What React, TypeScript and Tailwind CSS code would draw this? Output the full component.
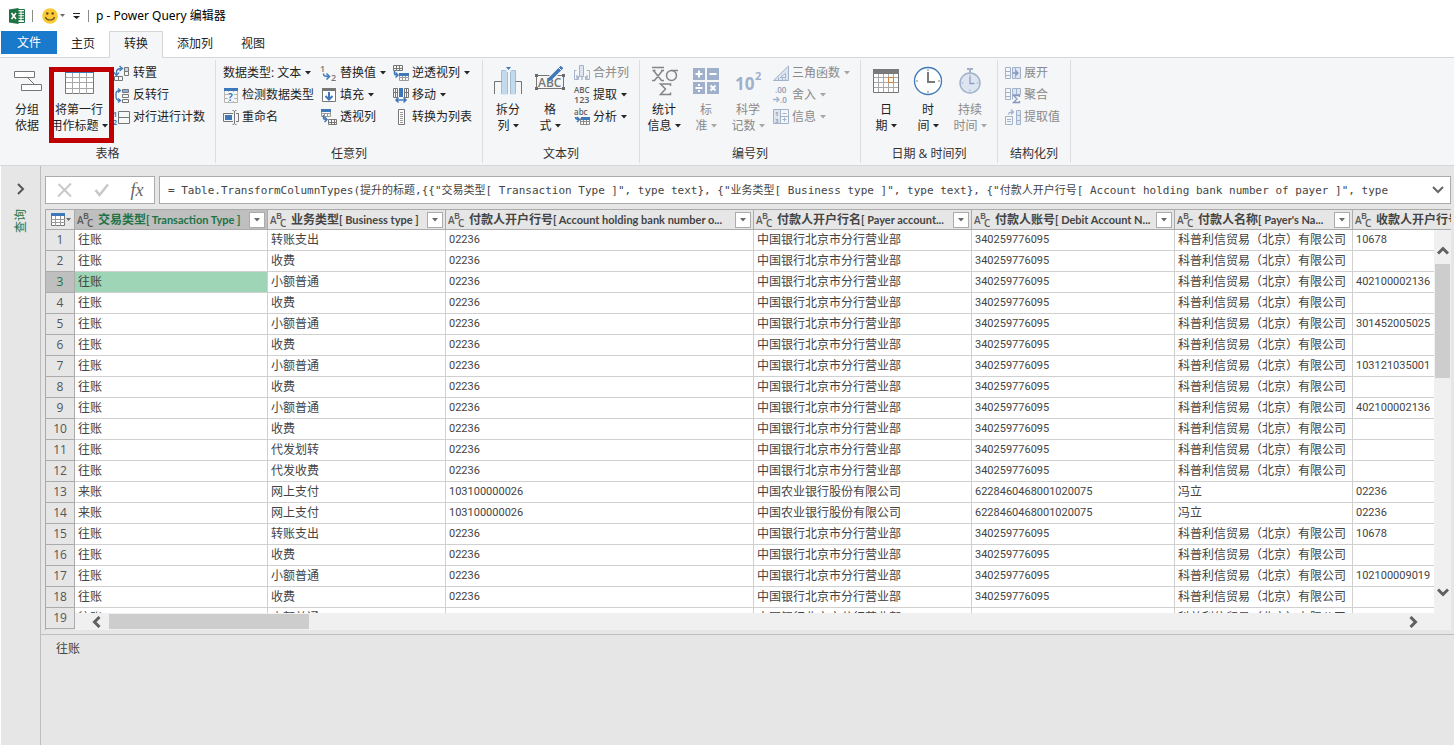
import React from 'react';

const GREY = '#767676';
const BLUE = '#3f78b8';
const DIM = '#a3b2cb';
const DIM_FILL = '#dde5f1';

const Svg: React.FC<{ size?: number; children: React.ReactNode }> = ({ size = 16, children }) => (
    <svg width={size} height={size} viewBox={`0 0 ${size} ${size}`} fill="none" className="shrink-0 overflow-visible" aria-hidden="true">
        {children}
    </svg>
);

const Caret: React.FC<{ dim?: boolean }> = ({ dim }) => (
    <svg width="6" height="4" viewBox="0 0 6 4" className="shrink-0" aria-hidden="true">
        <path d="M0 0h6L3 3.5z" fill={dim ? '#a6a6a6' : '#262626'} />
    </svg>
);

/* ---------- small ribbon icons (16px) ---------- */

const TransposeIcon = () => (
    <Svg>
        <path d="M10.5 2.5h4v4h-4z" fill="#c3d5ea" stroke={GREY} />
        <path d="M10.5 6.5h4v4h-4zM.5 11.5h4v4h-4zM4.500 11.5h4v4h-4z" stroke={GREY} />
        <path d="M2.500 9.500V7c0-2.500 1.500-3.500 5-3.500" stroke={BLUE} strokeWidth="1.300" />
        <path d="M5.500 1l3 2.500-3 2.500M0 7.500l2.500 3 2.500-3" stroke={BLUE} strokeWidth="1.300" />
    </Svg>
);

const ReverseIcon = () => (
    <Svg>
        <path d="M8.500 2.500h6v3h-6z" fill="#8fb0d5" stroke={GREY} />
        <path d="M8.500 7.500h6v3h-6zM8.500 12.500h6v3h-6z" stroke={GREY} />
        <path d="M6 3.500C1.500 3.500 2 6 2 8.500s0 5 4 5" stroke={BLUE} strokeWidth="1.300" />
        <path d="M4 1.500l2.500 2L4 5.500M4 11.500l2.500 2-2.500 2" stroke={BLUE} strokeWidth="1.300" />
    </Svg>
);

const CountIcon = () => (
    <Svg>
        <path d="M4.500 2.500h11v12h-11zM4.500 8.500h11" stroke={GREY} />
        <text x="-1" y="8" fontSize="7" fontWeight="700" fill={BLUE}>1</text>
        <text x="-1" y="16" fontSize="7" fontWeight="700" fill={BLUE}>2</text>
    </Svg>
);

const DetectIcon = () => (
    <Svg>
        <path d="M1.500 3.500h13v12h-13zM5.500 3v12M10.500 3v12M1 7.500h14M1 11.500h14" stroke="#b4b4b4" />
        <path d="M1 1h14v3H1z" fill={BLUE} />
        <path d="M5 5h6v9H5z" fill="#f5f6f8" />
        <text x="5" y="14" fontSize="10" fontWeight="700" fill={BLUE}>?</text>
    </Svg>
);

const RenameIcon = () => (
    <Svg>
        <path d="M10 4.500H.5v8H10M13 4.500h2.500v8H13" stroke={GREY} />
        <path d="M2 6h7v5H2z" fill={BLUE} />
        <path d="M9.500 1.500c1.500 0 2 .5 2 1.500v11c0 1-.5 1.500-2 1.500M13.500 1.500c-1.500 0-2 .5-2 1.500v11c0 1 .5 1.500 2 1.500" stroke={GREY} />
    </Svg>
);

const ReplaceIcon = () => (
    <Svg>
        <text x="-1" y="7" fontSize="9" fontWeight="600" fill={GREY}>1</text>
        <text x="10" y="16" fontSize="9" fontWeight="600" fill={GREY}>2</text>
        <path d="M2.500 8.500c0 2.500 1 3 5 3" stroke={BLUE} strokeWidth="1.500" />
        <path d="M5.500 8.500l3 3-3 3" stroke={BLUE} strokeWidth="1.500" />
    </Svg>
);

const FillIcon = () => (
    <Svg>
        <path d="M1.500 1.500h13v13h-13z" fill="#fff" stroke={GREY} />
        <path d="M1 1h14v3H1z" fill={GREY} />
        <path d="M8 5v7M4.500 9L8 12.500 11.500 9" stroke={BLUE} strokeWidth="2" />
    </Svg>
);

const PivotIcon = () => (
    <Svg>
        <path d="M.5 1.500h9v6h-9zM3.500 4v4M6.500 4v4M.5 4.500h9" stroke="#9a9a9a" />
        <path d="M0 0h10v3H0z" fill={BLUE} />
        <path d="M7.500 10.500h8v5h-8zM10.500 10v5M13.500 10v5M7 13.500h8" stroke={GREY} />
        <path d="M2.500 6v3c0 1 .5 1.500 3 1.500" stroke={BLUE} strokeWidth="1.500" />
        <path d="M3.500 8l2.500 2.500L3.500 13" stroke={BLUE} strokeWidth="1.500" />
    </Svg>
);

const UnpivotIcon = () => (
    <Svg>
        <path d="M.5.5h9v5h-9zM3.500 0v5M6.500 0v5M0 3.500h9" stroke={GREY} />
        <path d="M6.500 9.500h9v6h-9zM9.500 11v4M12.500 11v4M6.500 12.500h9" stroke="#9a9a9a" />
        <path d="M6 8h10v3H6z" fill={BLUE} />
        <path d="M1.500 6v2.500c0 1 .5 1.500 2.500 1.500" stroke={BLUE} strokeWidth="1.500" />
        <path d="M2.500 7.500L5 10l-2.500 2.500" stroke={BLUE} strokeWidth="1.500" />
    </Svg>
);

const MoveIcon = () => (
    <Svg>
        <path d="M.5 1.500h4v9h-4zM11.500 1.500h4v9h-4zM2.500 1v9M13.500 1v9M.5 5.500h4M11.500 5.500h4" stroke={GREY} />
        <path d="M6 1h4v9H6z" fill={BLUE} />
        <path d="M3 13h10M5.500 10.500L3 13l2.500 2.500M10.500 10.500L13 13l-2.500 2.500" stroke={BLUE} strokeWidth="1.500" />
    </Svg>
);

const ListIcon = () => (
    <Svg>
        <path d="M5.500.5h6v15h-6z" fill="#fff" stroke={GREY} />
        <path d="M7 3.500h3M7 5.500h3M7 7.500h3M7 9.500h3M7 11.500h3M7 13.500h3" stroke="#999" />
    </Svg>
);

const MergeIcon = () => (
    <Svg>
        <path d="M5.500.5h4v11h-4z" fill={DIM_FILL} stroke={DIM} />
        <path d="M2.500 5.500h-2v9h4v-3M12.500 5.500h3v9h-4v-3" stroke={DIM} />
        <path d="M3 15v-4l2 2M13 15v-4l-2 2M8 15v-3" stroke={DIM} strokeWidth="1.300" />
    </Svg>
);

const ExtractIcon = () => (
    <Svg>
        <text x="0" y="6" fontSize="8" fontWeight="600" fill="#5f5f5f">ABC</text>
        <text x="0" y="16" fontSize="9" fontWeight="600" fill="#5f5f5f">123</text>
    </Svg>
);

const ParseIcon = () => (
    <Svg>
        <text x="0" y="6" fontSize="8" fontWeight="600" fill="#5f5f5f">abc</text>
        <path d="M6.500 9.500h9v6h-9zM9.500 11v4M12.500 11v4M6.500 12.500h9" stroke="#8a8a8a" />
        <path d="M7 8h9v3H7z" fill={BLUE} />
        <path d="M1.500 8c0 2 1 2.500 3.500 2.500M3 8l2.500 2.500L3 13" stroke={BLUE} strokeWidth="1.500" />
    </Svg>
);

const TrigIcon = () => (
    <Svg>
        <path d="M15.500 1v14.500H.5z" fill={DIM_FILL} stroke={DIM} />
        <path d="M12.500 8.500v4h-5z" fill="#f5f6f8" stroke={DIM} />
        <path d="M5.500 15.500v-3M9.500 15.500v-2M12.500 15.500v-2" stroke={DIM} />
    </Svg>
);

const RoundIcon = () => (
    <Svg>
        <text x="2" y="6" fontSize="8" fontWeight="600" fill="#8d9bb3">.00</text>
        <text x="7" y="16" fontSize="8" fontWeight="600" fill="#8d9bb3">.0</text>
        <path d="M0 12.500h6M3.500 10L6 12.500 3.500 15" stroke={DIM} strokeWidth="1.300" />
    </Svg>
);

const InfoIcon = () => (
    <Svg>
        <path d="M.5.5h15v14H.5z" fill="#f5f6f8" stroke={DIM} />
        <path d="M1 1h6v13H1z" fill={DIM_FILL} />
        <path d="M7.500 1v13M7.500 7.500h8M9.500 4.500h4M9.500 10.500h4M11.500 8.500v4" stroke={DIM} />
        <text x="2" y="7" fontSize="6" fontWeight="700" fill="#8d9bb3">1</text>
        <text x="2" y="14" fontSize="6" fontWeight="700" fill="#8d9bb3">3</text>
    </Svg>
);

const ExpandIcon = () => (
    <Svg>
        <path d="M.5 2.500h5v11h-5zM.5 6.500h5M.5 10.500h5" stroke={DIM} />
        <path d="M7.500 2.500h3v11h-3z" fill={DIM_FILL} stroke={DIM} />
        <path d="M10.500 2.500h5v11h-5z" fill={DIM_FILL} stroke={DIM} />
        <path d="M7.500 8H13M10.500 5.500L13 8l-2.500 2.500" stroke="#8499bd" strokeWidth="1.300" />
    </Svg>
);

const AggregateIcon = () => (
    <Svg>
        <path d="M.5 1.500h5v11h-5zM.5 5.500h5M.5 9.500h5" stroke={DIM} />
        <path d="M7.500 1.500h8v6h-8zM11.500 1v6M7.500 7.500v5" fill={DIM_FILL} stroke={DIM} />
        <path d="M14.500 10V8.500h-6L12 12l-3.500 3.500h6V14" stroke="#8499bd" strokeWidth="1.300" />
    </Svg>
);

const ValuesIcon = () => (
    <Svg>
        <path d="M.5 7.500h7v8h-7zM2 10.500h4M2 12.500h4" stroke={DIM} />
        <path d="M11.500 1.500h4v14h-4zM11.500 6.500h4M11.500 11.500h4" fill={DIM_FILL} stroke={DIM} />
        <path d="M3.500 5.500c0-2 1-2.500 5-2.500M6 .5L8.500 3 6 5.500" stroke={DIM} strokeWidth="1.300" />
    </Svg>
);

/* ---------- large ribbon icons (32px) ---------- */

const GroupByIcon = () => (
    <Svg size={32}>
        <path d="M3.500 5.500h20v6h-20zM10.500 18.500h20v6h-20z" fill="#fff" stroke={GREY} />
        <path d="M17 12l6 6" stroke={GREY} />
    </Svg>
);

const HeaderRowIcon = () => (
    <Svg size={32}>
        <path d="M2.500 6.500h28v21h-28z" fill="#fff" stroke={GREY} />
        <path d="M9.500 7v21M16.500 7v21M23.500 7v21M3 11.500h27M3 16.500h27M3 22.500h27" stroke="#a8a8a8" />
        <path d="M2 4h29v3H2z" fill={BLUE} />
    </Svg>
);

const SplitIcon = () => (
    <Svg size={32}>
        <path d="M10 4.500h5v24h-5zM18 4.500h5v24h-5z" fill="#c3d9ec" />
        <path d="M9.500 28V4.500h4M23.500 28V4.500h-4M15.500 28V6M18.500 28V6" stroke="#a9bccf" />
        <path d="M2.500 28V15.500h7M29.500 28V15.500h-6" stroke={GREY} />
        <path d="M14 1h5l-2.500 3z" fill={BLUE} />
    </Svg>
);

const FormatIcon = () => (
    <Svg size={32}>
        <path d="M2.500 9.500h27v13h-27z" stroke={GREY} />
        <path d="M1 8h3v3H1zM28 8h3v3h-3zM1 21h3v3H1zM28 21h3v3h-3z" fill="#6a6a6a" />
        <text x="4" y="21" fontSize="12" fontWeight="600" fill={GREY}>ABC</text>
        <path d="M27.500 1.500L17 12" stroke="#f5f6f8" strokeWidth="6" />
        <path d="M28 1L16 13" stroke={BLUE} strokeWidth="3.500" />
        <path d="M15 11l3 3-5 2z" fill={BLUE} />
        <path d="M24.500 1.500l3 3" stroke="#f5f6f8" />
    </Svg>
);

const StatsIcon = () => (
    <Svg size={32}>
        <path d="M4 1.500h12M5.500 4.500l8 10M14.500 4.500l-8 10M4 14.500h3M13 14.500h3M4.500 4.500h3M13 4.500h3" stroke="#858585" strokeWidth="1.500" />
        <path d="M30 4.500h-6.500" stroke="#858585" strokeWidth="1.500" />
        <circle cx="23.500" cy="9.500" r="5" stroke="#858585" strokeWidth="1.500" />
        <path d="M22.500 20v-2H12.500l5 5-5 5.500h10v-2" stroke="#858585" strokeWidth="1.500" />
    </Svg>
);

const StandardIcon = () => (
    <Svg size={32}>
        <path d="M3 2h12v12H3zM17 2h12v12H17zM3 16h12v12H3zM17 16h12v12H17z" fill="#9fb0cd" />
        <path d="M5.500 8h7M9 4.500v7M19.500 8h7M5.500 22h7M20.500 19.500l5 5M25.500 19.500l-5 5" stroke="#fff" strokeWidth="2" />
        <path d="M8 18h2v2H8zM8 24h2v2H8z" fill="#fff" />
    </Svg>
);

const ScientificIcon = () => (
    <Svg size={32}>
        <text x="3" y="24" fontSize="17" fontWeight="700" fill="#9fb0cd">10</text>
        <text x="23" y="14" fontSize="11" fontWeight="700" fill="#9fb0cd">2</text>
    </Svg>
);

const DateIcon = () => (
    <Svg size={32}>
        <path d="M3.500 4.500h25v22h-25z" fill="#fff" stroke={GREY} />
        <path d="M8.500 8v18M13.500 8v18M18.500 8v18M23.500 8v18M4 11.500h24M4 16.500h24M4 21.500h24" stroke="#a8a8a8" />
        <path d="M3 3h26v5H3z" fill="#7a7a7a" />
        <path d="M18.500 11.500h5v5h-5z" fill="#fff" stroke="#e07b28" />
    </Svg>
);

const TimeIcon = () => (
    <Svg size={32}>
        <circle cx="16" cy="15" r="13.500" fill="#fff" stroke={BLUE} strokeWidth="1.300" />
        <path d="M16 6v10h7" stroke="#7a7a7a" strokeWidth="2" />
        <path d="M16 3v2M16 25v2M4 15h2M26 15h2" stroke="#7a7a7a" />
    </Svg>
);

const DurationIcon = () => (
    <Svg size={32}>
        <circle cx="16" cy="17" r="10" fill={DIM_FILL} stroke={DIM} strokeWidth="1.500" />
        <path d="M13 3h6M16 3v4" stroke={DIM} strokeWidth="2" />
        <path d="M16 10.500v7h4.500" stroke="#8d9fc0" strokeWidth="1.300" />
        <path d="M16 8.500v2M16 23.500v2M7.500 17h2M22.500 17h2" stroke={DIM} />
    </Svg>
);

/* ---------- ribbon building blocks ---------- */

interface SmallButtonProps {
    label: string;
    icon?: React.ReactNode;
    caret?: boolean;
    disabled?: boolean;
}

const SmallButton: React.FC<SmallButtonProps> = ({ label, icon, caret, disabled }) => (
    <button
        type="button"
        disabled={disabled}
        className="flex h-[22px] items-center gap-[3px] whitespace-nowrap text-[#1e1e1e] disabled:text-[#8a8a8a]"
    >
        {icon}
        <span className="mr-px">{label}</span>
        {caret && <Caret dim={disabled} />}
    </button>
);

interface LargeButtonProps {
    lines: [string, string];
    icon: React.ReactNode;
    caret?: boolean;
    disabled?: boolean;
    className: string;
}

const LargeButton: React.FC<LargeButtonProps> = ({ lines, icon, caret, disabled, className }) => (
    <button
        type="button"
        disabled={disabled}
        className={`flex shrink-0 flex-col items-center pt-1 whitespace-nowrap leading-4 text-[#1e1e1e] disabled:text-[#8a8a8a] ${className}`}
    >
        {icon}
        <span className="mt-1">{lines[0]}</span>
        <span className="flex items-center gap-[3px]">
            {lines[1]}
            {caret && <Caret dim={disabled} />}
        </span>
    </button>
);

interface GroupProps {
    label: string;
    width: string;
    inset: string;
    children: React.ReactNode;
}

const Group: React.FC<GroupProps> = ({ label, width, inset, children }) => (
    <section className={`my-0.5 flex shrink-0 flex-col justify-between border-r border-[#dcdee1] ${width}`}>
        <div className={`flex pt-0.5 ${inset}`}>{children}</div>
        <h2 className="pb-px text-center text-[#333]">{label}</h2>
    </section>
);

const Column: React.FC<{ className?: string; children: React.ReactNode }> = ({ className = '', children }) => (
    <div className={`flex shrink-0 flex-col items-start ${className}`}>{children}</div>
);

const Ribbon = () => (
    <div className="flex h-[109px] overflow-hidden border-y border-[#d5d7da] bg-[#f5f6f8]">
        <Group label="表格" width="w-[216px]" inset="pl-0.5">
            <LargeButton lines={['分组', '依据']} icon={<GroupByIcon />} className="w-[50px]" />
            <div className="relative">
                <LargeButton lines={['将第一行', '用作标题']} icon={<HeaderRowIcon />} caret className="w-[54px]" />
                <div className="pointer-events-none absolute top-[5px] -left-[3px] h-[76px] w-[65px] border-[5px] border-[#c00000]" />
            </div>
            <Column className="pl-2">
                <SmallButton label="转置" icon={<TransposeIcon />} />
                <SmallButton label="反转行" icon={<ReverseIcon />} />
                <SmallButton label="对行进行计数" icon={<CountIcon />} />
            </Column>
        </Group>

        <Group label="任意列" width="w-[267px]" inset="pl-[7px]">
            <Column className="w-[98px]">
                <SmallButton label="数据类型: 文本" caret />
                <SmallButton label="检测数据类型" icon={<DetectIcon />} />
                <SmallButton label="重命名" icon={<RenameIcon />} />
            </Column>
            <Column className="w-[72px]">
                <SmallButton label="替换值" icon={<ReplaceIcon />} caret />
                <SmallButton label="填充" icon={<FillIcon />} caret />
                <SmallButton label="透视列" icon={<PivotIcon />} />
            </Column>
            <Column>
                <SmallButton label="逆透视列" icon={<UnpivotIcon />} caret />
                <SmallButton label="移动" icon={<MoveIcon />} caret />
                <SmallButton label="转换为列表" icon={<ListIcon />} />
            </Column>
        </Group>

        <Group label="文本列" width="w-[157px]" inset="pl-[3px]">
            <LargeButton lines={['拆分', '列']} icon={<SplitIcon />} caret className="w-[44px]" />
            <LargeButton lines={['格', '式']} icon={<FormatIcon />} caret className="w-10" />
            <Column className="pl-1">
                <SmallButton label="合并列" icon={<MergeIcon />} disabled />
                <SmallButton label="提取" icon={<ExtractIcon />} caret />
                <SmallButton label="分析" icon={<ParseIcon />} caret />
            </Column>
        </Group>

        <Group label="编号列" width="w-[221px]" inset="pl-0.5">
            <LargeButton lines={['统计', '信息']} icon={<StatsIcon />} caret className="w-[44px]" />
            <LargeButton lines={['标', '准']} icon={<StandardIcon />} caret disabled className="w-10" />
            <LargeButton lines={['科学', '记数']} icon={<ScientificIcon />} caret disabled className="w-[44px]" />
            <Column className="pl-[3px]">
                <SmallButton label="三角函数" icon={<TrigIcon />} caret disabled />
                <SmallButton label="舍入" icon={<RoundIcon />} caret disabled />
                <SmallButton label="信息" icon={<InfoIcon />} caret disabled />
            </Column>
        </Group>

        <Group label="日期 & 时间列" width="w-[137px]" inset="pl-[3px]">
            <LargeButton lines={['日', '期']} icon={<DateIcon />} caret className="w-[44px]" />
            <LargeButton lines={['时', '间']} icon={<TimeIcon />} caret className="w-10" />
            <LargeButton lines={['持续', '时间']} icon={<DurationIcon />} caret disabled className="w-[44px]" />
        </Group>

        <Group label="结构化列" width="w-[73px]" inset="pl-[7px]">
            <Column>
                <SmallButton label="展开" icon={<ExpandIcon />} disabled />
                <SmallButton label="聚合" icon={<AggregateIcon />} disabled />
                <SmallButton label="提取值" icon={<ValuesIcon />} disabled />
            </Column>
        </Group>
    </div>
);

/* ---------- title bar and tabs ---------- */

const TitleBar = () => (
    <header className="flex h-[31px] items-center pl-[9px]">
        <svg width="16" height="16" viewBox="0 0 16 16" aria-hidden="true">
            <path d="M8 1.500h7.500v13H8z" fill="#fff" stroke="#1f7244" />
            <path d="M9 4h2.500M9 6.500h2.500M9 9h2.500M9 11.500h2.500M12.500 4H15M12.500 6.500H15M12.500 9H15M12.500 11.500H15" stroke="#1f7244" strokeWidth="1.300" />
            <path d="M0 1.500L9.500 0v16L0 14.500z" fill="#1f7244" />
            <path d="M2.500 5l4.500 6M7 5l-4.500 6" stroke="#fff" strokeWidth="1.600" />
        </svg>
        <span className="ml-[7px] h-3 w-px bg-[#8a8a8a]" />
        <button type="button" aria-label="反馈" className="ml-[9px] flex items-center gap-0.5">
            <svg width="16" height="16" viewBox="0 0 16 16" aria-hidden="true">
                <circle cx="8" cy="8" r="7.800" fill="#fbc934" />
                <circle cx="5.300" cy="5.500" r="1.200" fill="#5b4a1c" />
                <circle cx="10.700" cy="5.500" r="1.200" fill="#5b4a1c" />
                <path d="M3.500 9c1 4 8 4 9 0" fill="none" stroke="#5b4a1c" strokeWidth="1.200" />
            </svg>
            <svg width="5" height="3" viewBox="0 0 5 3" aria-hidden="true">
                <path d="M0 0h5L2.500 3z" fill="#6a6a6a" />
            </svg>
        </button>
        <button type="button" aria-label="自定义快速访问工具栏" className="ml-2">
            <svg width="7" height="6" viewBox="0 0 7 6" aria-hidden="true">
                <path d="M0 0h7v1H0zM0 3h7L3.500 6z" fill="#222" />
            </svg>
        </button>
        <span className="ml-2 h-3 w-px bg-[#8a8a8a]" />
        <h1 className="ml-[7px] font-['Noto_Sans','Noto_Sans_CJK_SC',sans-serif] text-black">p - Power Query 编辑器</h1>
    </header>
);

const Tabs = () => (
    <nav role="tablist" className="flex h-[26px] items-start pl-px">
        <button type="button" className="h-[23px] w-14 bg-[#1979ca] text-white">文件</button>
        <button type="button" role="tab" className="h-[25px] px-3.5 text-[#222]">主页</button>
        <button
            type="button"
            role="tab"
            aria-selected="true"
            className="relative h-[27px] border border-b-0 border-[#d5d7da] bg-[#f5f6f8] px-3.5 pb-0.5 text-[#222]"
        >
            转换
        </button>
        <button type="button" role="tab" className="h-[25px] px-3.5 text-[#222]">添加列</button>
        <button type="button" role="tab" className="h-[25px] px-3.5 text-[#222]">视图</button>
    </nav>
);

/* ---------- formula bar ---------- */

const FORMULA =
    '= Table.TransformColumnTypes(提升的标题,{{"交易类型[ Transaction Type ]", type text}, {"业务类型[ Business type ]", type text}, {"付款人开户行号[ Account holding bank number of payer ]", type';

const FormulaBar = () => (
    <div className="flex gap-1">
        <div className="flex h-7 w-[110px] shrink-0 items-center justify-around border border-[#ababab] bg-white">
            <button type="button" aria-label="取消" disabled>
                <svg width="16" height="16" viewBox="0 0 16 16" aria-hidden="true">
                    <path d="M1.500 2L14 14.500M14 1.500L1 14.500" fill="none" stroke="#c8c8c8" strokeWidth="2" />
                </svg>
            </button>
            <button type="button" aria-label="提交" disabled>
                <svg width="16" height="16" viewBox="0 0 16 16" aria-hidden="true">
                    <path d="M1.500 8l4 5L14 2.500" fill="none" stroke="#c8c8c8" strokeWidth="2.500" />
                </svg>
            </button>
            <button type="button" aria-label="插入步骤" className="font-['Liberation_Serif',serif] text-lg leading-6 text-[#666] italic">
                fx
            </button>
        </div>
        <div className="flex h-7 min-w-0 flex-1 items-center border border-[#ababab] bg-white pr-1.5 pl-2">
            <input
                type="text"
                aria-label="公式"
                defaultValue={FORMULA}
                className="h-6 min-w-0 flex-1 bg-transparent pb-0.5 font-['DejaVu_Sans_Mono','Noto_Sans_CJK_SC',monospace] text-[11px] text-[#444] outline-none"
            />
            <button type="button" aria-label="展开编辑栏">
                <svg width="12" height="8" viewBox="0 0 12 8" aria-hidden="true">
                    <path d="M1 1l5 5 5-5" fill="none" stroke="#666" strokeWidth="2" />
                </svg>
            </button>
        </div>
    </div>
);

/* ---------- data grid ---------- */

interface GridColumn {
    cn: string;
    en: string;
    width: string;
}

const columns: GridColumn[] = [
    { cn: '交易类型', en: '[ Transaction Type ]', width: 'w-[193px]' },
    { cn: '业务类型', en: '[ Business type ]', width: 'w-[178px]' },
    { cn: '付款人开户行号', en: '[ Account holding bank number o...', width: 'w-[308px]' },
    { cn: '付款人开户行名', en: '[ Payer account...', width: 'w-[218px]' },
    { cn: '付款人账号', en: '[ Debit Account N...', width: 'w-[203px]' },
    { cn: '付款人名称', en: "[ Payer's Na...", width: 'w-[178px]' },
    { cn: '收款人开户行号', en: '', width: 'w-[240px]' },
];

const BANK = '中国银行北京市分行营业部';
const COMPANY = '科普利信贸易（北京）有限公司';
const ACCOUNT = '340259776095';

const outgoing = (kind: string, payeeBank = ''): string[] => ['往账', kind, '02236', BANK, ACCOUNT, COMPANY, payeeBank];
const incoming = (): string[] => ['来账', '网上支付', '103100000026', '中国农业银行股份有限公司', '6228460468001020075', '冯立', '02236'];

const rows: string[][] = [
    outgoing('转账支出', '10678'),
    outgoing('收费'),
    outgoing('小额普通', '402100002136'),
    outgoing('收费'),
    outgoing('小额普通', '301452005025'),
    outgoing('收费'),
    outgoing('小额普通', '103121035001'),
    outgoing('收费'),
    outgoing('小额普通', '402100002136'),
    outgoing('收费'),
    outgoing('代发划转'),
    outgoing('代发收费'),
    incoming(),
    incoming(),
    outgoing('转账支出', '10678'),
    outgoing('收费'),
    outgoing('小额普通', '102100009019'),
    outgoing('收费'),
    outgoing('小额普通'),
];

const SELECTED_ROW = 2;
const SELECTED_COL = 0;

const TextTypeIcon = () => (
    <svg width="17" height="17" viewBox="0 0 17 17" className="shrink-0 overflow-visible" aria-hidden="true">
        <g fill="#5a5a5a" fontWeight="600">
            <text x="0" y="13" fontSize="10">A</text>
            <text x="6" y="8" fontSize="9">B</text>
            <text x="10" y="16" fontSize="10">C</text>
        </g>
    </svg>
);

const HeaderCell: React.FC<{ column: GridColumn; selected: boolean }> = ({ column, selected }) => (
    <th
        scope="col"
        className={`border-r border-b border-[#ababab] p-0 font-bold ${
            selected ? 'bg-[#bfbfbf] text-[#217346]' : 'bg-[#e6e6e6] text-[#444]'
        }`}
    >
        <div className="flex h-[19px] items-center pr-0.5 pl-0.5">
            <TextTypeIcon />
            <span className="ml-1 flex min-w-0 flex-1 items-center leading-[19px] whitespace-nowrap">
                {column.cn}
                <span className="font-['Lato','Noto_Sans_CJK_SC',sans-serif] text-[11px]">{column.en}</span>
            </span>
            <button type="button" aria-label="筛选" className="flex size-4 shrink-0 items-center justify-center border border-[#ababab] bg-white">
                <svg width="6" height="4" viewBox="0 0 6 4" aria-hidden="true">
                    <path d="M0 0h6L3 3.500z" fill="#6a6a6a" />
                </svg>
            </button>
        </div>
    </th>
);

const Grid = () => (
    <div className="relative mt-[5px] overflow-hidden border-t border-l border-[#ababab] pb-px">
        <table className="w-[1547px] table-fixed border-separate border-spacing-0 text-[#444]">
            <colgroup>
                <col className="w-[29px]" />
                {columns.map(c => <col key={c.cn} className={c.width} />)}
            </colgroup>
            <thead>
                <tr>
                    <th className="border-r border-b border-[#ababab] bg-[#e6e6e6] p-0">
                        <button type="button" aria-label="表格选项" className="flex h-[19px] w-full items-center gap-px pl-[5px]">
                            <svg width="14" height="13" viewBox="0 0 14 13" fill="none" aria-hidden="true">
                                <path d="M.5 1.500h13v11H.5z" fill="#fff" stroke={GREY} />
                                <path d="M4.500 3v10M9.500 3v10M0 6.500h14M0 9.500h14" stroke="#999" />
                                <path d="M0 0h14v3H0z" fill={BLUE} />
                            </svg>
                            <svg width="5" height="3" viewBox="0 0 5 3" aria-hidden="true">
                                <path d="M0 0h5L2.500 3z" fill="#6a6a6a" />
                            </svg>
                        </button>
                    </th>
                    {columns.map((c, i) => <HeaderCell key={c.cn} column={c} selected={i === SELECTED_COL} />)}
                </tr>
            </thead>
            <tbody>
                {rows.map((row, r) => (
                    <tr key={r}>
                        <th
                            scope="row"
                            className={`h-[21px] border-r border-b border-[#ababab] p-0 text-center font-normal leading-5 ${
                                r === SELECTED_ROW ? 'bg-[#bfbfbf] text-[#217346]' : 'bg-[#e6e6e6] text-[#555]'
                            }`}
                        >
                            {r + 1}
                        </th>
                        {row.map((value, c) => (
                            <td
                                key={c}
                                className={`h-[21px] overflow-hidden border-r border-b border-[#d0d0d0] p-0 pl-[3px] leading-5 whitespace-nowrap ${
                                    /^\d/.test(value) ? "font-['Roboto',sans-serif] text-[11px]" : ''
                                } ${r === SELECTED_ROW && c === SELECTED_COL ? 'bg-[#9fd5b7]' : 'bg-white'}`}
                            >
                                {value}
                            </td>
                        ))}
                    </tr>
                ))}
            </tbody>
        </table>

        {/* scrollbars float over the last rows and columns */}
        <div className="absolute top-5 right-0 bottom-[17px] flex w-[17px] flex-col items-center bg-[#f0f0f0] pt-4 pb-4">
            <svg width="12" height="9" viewBox="0 0 12 9" fill="none" className="shrink-0" aria-hidden="true">
                <path d="M1 7.500l5-5 5 5" stroke="#606060" strokeWidth="3" />
            </svg>
            <div className="mt-[9px] h-[114px] w-[15px] bg-[#cdcdcd]" />
            <svg width="12" height="9" viewBox="0 0 12 9" fill="none" className="mt-auto shrink-0" aria-hidden="true">
                <path d="M1 1.500l5 5 5-5" stroke="#606060" strokeWidth="3" />
            </svg>
        </div>
        <div className="absolute right-0 bottom-0 left-[29px] flex h-[17px] items-center bg-[#f0f0f0] pr-[33px] pl-[17px]">
            <svg width="9" height="12" viewBox="0 0 9 12" fill="none" aria-hidden="true">
                <path d="M7.500 1l-5 5 5 5" stroke="#606060" strokeWidth="3" />
            </svg>
            <div className="ml-2 h-[15px] w-[200px] bg-[#cdcdcd]" />
            <svg width="9" height="12" viewBox="0 0 9 12" fill="none" className="ml-auto" aria-hidden="true">
                <path d="M1.500 1l5 5-5 5" stroke="#606060" strokeWidth="3" />
            </svg>
        </div>
    </div>
);

const Sidebar = () => (
    <aside className="flex w-10 shrink-0 flex-col items-center border-r border-[#bdbdbd] pt-[17px]">
        <button type="button" aria-label="展开查询窗格">
            <svg width="8" height="12" viewBox="0 0 8 12" fill="none" aria-hidden="true">
                <path d="M1 1l5 5-5 5" stroke="#555" strokeWidth="2" />
            </svg>
        </button>
        <span className="mt-3.5 rotate-180 leading-4 text-[#217346] [text-orientation:sideways] [writing-mode:vertical-rl]">查询</span>
    </aside>
);

const App: React.FC = () => (
    <div className="flex min-h-screen flex-col bg-white font-['Open_Sans','Noto_Sans_CJK_SC',sans-serif] text-xs">
        <TitleBar />
        <Tabs />
        <Ribbon />
        <div className="ml-px flex flex-1 bg-[#e6e6e6]">
            <Sidebar />
            <main className="flex min-w-0 flex-1 flex-col">
                <div className="border-b border-[#bdbdbd] pt-2.5 pr-[3px] pb-1 pl-1">
                    <FormulaBar />
                    <Grid />
                </div>
                <div className="px-[15px] py-1.5 text-[#444]">往账</div>
            </main>
        </div>
    </div>
);

export default App;
